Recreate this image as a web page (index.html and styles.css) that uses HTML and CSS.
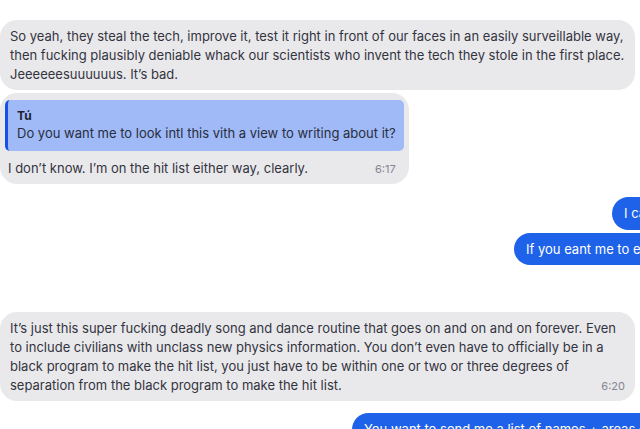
FILE: index.html
```html
<!DOCTYPE html>
<html>
<head>
<meta charset="utf-8">
<link rel="stylesheet" href="styles.css">
</head>
<body>
<div class="chat">
  <div class="msg in m1">So yeah, they steal the tech, improve it, test it right in front of our faces in an easily surveillable way, then fucking plausibly deniable whack our scientists who invent the tech they stole in the first place. Jeeeeeesuuuuuus. It’s bad.</div>
  <div class="msg in m2">
    <div class="quote">
      <div class="quote-name">Tú</div>
      <div class="quote-text">Do you want me to look intl this vith a view to writing about it?</div>
    </div>
    <div class="body">I don’t know. I’m on the hit list either way, clearly.<span class="time">6:17</span></div>
  </div>
  <div class="out-row o1"><div class="msg out">I can look into it if you want, no problem at all.</div></div>
  <div class="out-row o2"><div class="msg out">If you eant me to explore this further, just say the word.</div></div>
  <div class="msg in m3">It’s just this super fucking deadly song and dance routine that goes on and on and on forever. Even to include civilians with unclass new physics information. You don’t even have to officially be in a black program to make the hit list, you just have to be within one or two or three degrees of separation from the black program to make the hit list.<span class="time">6:20</span></div>
  <div class="out-row o3"><div class="msg out">You want to send me a list of names + areas of research?</div></div>
</div>
</body>
</html>
```

FILE: styles.css
```css
html, body {
  margin: 0;
  padding: 0;
  background: #ffffff;
  overflow: hidden;
}
body {
  width: 640px;
  height: 429px;
  font-family: Inter, "Noto Sans", sans-serif;
  font-size: 13px;
  line-height: 19px;
  color: #34343f;
}
.chat {
  display: flex;
  flex-direction: column;
  align-items: flex-start;
  padding-top: 20px;
}
.msg {
  box-sizing: border-box;
  border-radius: 17px;
}
.in {
  background: #e9e9eb;
  max-width: 635px;
  padding: 7px 10px 6px 10px;
}
.m1 {
  margin-bottom: 3px;
}
.m2 {
  padding: 7px 5px 5px 5px;
}
.quote {
  background: #9fbaf6;
  border-left: 3px solid #1652e4;
  border-radius: 5px;
  padding: 7px 8px 8px 9px;
  margin-bottom: 8px;
}
.quote-name {
  font-weight: 700;
  font-size: 12px;
  line-height: 17px;
  color: #1e2130;
}
.quote-text {
  color: #2a2d3c;
}
.m2 .body {
  padding: 0 8px 0 3px;
}
.time {
  float: right;
  font-size: 11px;
  color: #858590;
  margin-left: 12px;
  margin-top: 1px;
}
.out-row {
  display: flex;
  white-space: nowrap;
}
.out {
  background: #1d62e9;
  color: #ffffff;
  padding: 7px 14px 7px 12px;
  border-radius: 17px;
}
.o1 {
  margin-top: 13px;
  padding-left: 612px;
}
.o2 {
  margin-top: 3px;
  padding-left: 514px;
}
.o2 .out {
  padding-bottom: 6px;
}
.m3 {
  margin-top: 47px;
  padding-bottom: 5px;
}
.o3 {
  margin-top: 12px;
  padding-left: 352px;
}
```
